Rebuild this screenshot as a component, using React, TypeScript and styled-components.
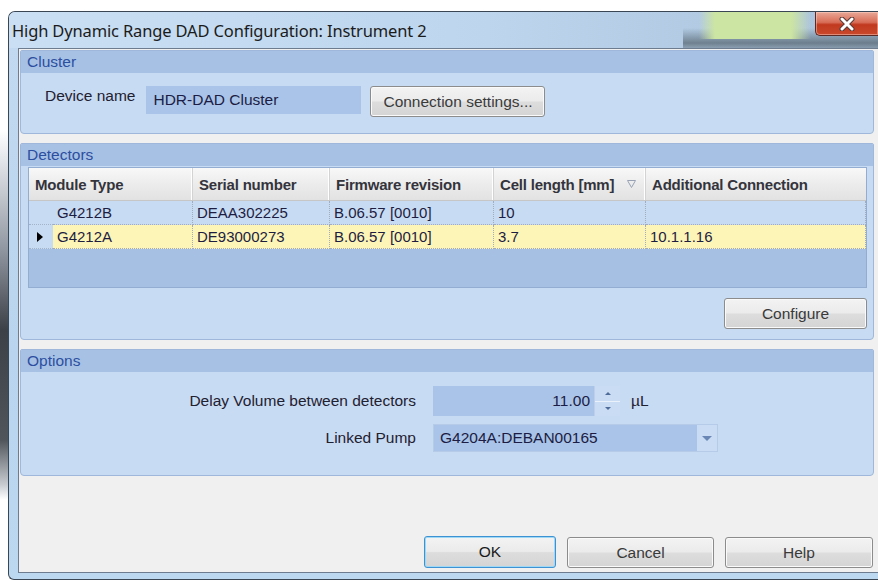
import styled, { createGlobalStyle } from "styled-components";

const GlobalStyle = createGlobalStyle`
  html, body {
    margin: 0;
    padding: 0;
  }
  body {
    width: 878px;
    height: 580px;
    overflow: hidden;
    font-family: "Liberation Sans", Arial, sans-serif;
    background:
      linear-gradient(
          to bottom,
          #ffffff 0,
          #ffffff 130px,
          #d9dde2 170px,
          #9096a0 250px,
          #3c4047 330px,
          #50555c 440px,
          #c9cdd2 485px,
          #ffffff 500px
        )
        left top / 8px 100% no-repeat,
      #ffffff;
  }
`;

const Frame = styled.div`
  box-sizing: border-box;
  margin: 11px 0 0 8px;
  width: 870px;
  height: 569px;
  border: 1px solid #3a4654;
  border-right: none;
  border-radius: 7px 0 0 6px;
  padding: 0 0 6px 0;
  display: flex;
  flex-direction: column;
  background: linear-gradient(to bottom, #c3daf1, #b9d4ee 60%, #bcd7f0);
`;

// glass title bar, with the blurred desktop showing through on the right
const TitleBar = styled.div`
  height: 36px;
  flex: none;
  display: flex;
  align-items: flex-start;
  padding-left: 3px;
  border-radius: 6px 0 0 0;
  background:
    linear-gradient(to right, rgba(205, 229, 162, 0), #cde5a2 16px, #cde5a2 92px, rgba(205, 229, 162, 0) 112px) 690px 0 / 112px 27px no-repeat,
    linear-gradient(to bottom, rgba(0, 0, 0, 0) 16px, rgba(66, 80, 88, 0.6) 31px, rgba(66, 80, 88, 0.35) 36px) right top / 195px 100% no-repeat,
    linear-gradient(to right, #cadff3, #bdd6ee 55%, #a9c1da);
`;

const Title = styled.div`
  margin-top: 7px;
  font-family: "Noto Sans", "Open Sans", sans-serif;
  font-size: 16.5px;
  letter-spacing: -0.15px;
  color: #1b1b1b;
  white-space: nowrap;
`;

const CloseButton = styled.div`
  margin-left: auto;
  width: 63px;
  height: 24px;
  box-sizing: border-box;
  border: 1px solid #5b2a24;
  border-top: none;
  border-right: none;
  border-radius: 0 0 0 5px;
  display: flex;
  align-items: center;
  justify-content: center;
  background: linear-gradient(to bottom, #e9a796 0%, #d86d57 45%, #c13a20 55%, #c9482c 100%);
  box-shadow: inset 0 0 0 1px rgba(255, 220, 210, 0.45);
`;

const Client = styled.div`
  flex: 1;
  margin-left: 9px;
  box-sizing: border-box;
  border: 1px solid #6d7d8f;
  border-right: none;
  background: #f0f0f0;
  display: flex;
  flex-direction: column;
`;

const Panel = styled.section<{ $gap: number }>`
  margin: ${(p) => p.$gap}px 4px 0 1px;
  border: 1px solid #9fb7da;
  border-radius: 2px 2px 4px 4px;
  overflow: hidden;
  background: #c7dbf3;
`;

const PanelHeader = styled.div`
  height: 22px;
  line-height: 22px;
  padding-left: 6px;
  background: #a7c1e5;
  color: #2c4f9f;
  font-size: 15.5px;
`;

const ClusterBody = styled.div`
  display: flex;
  align-items: flex-start;
  padding: 13px 0 16px 24px;
`;

const Label = styled.span`
  font-size: 15.5px;
  line-height: 20px;
  color: #1f2030;
  white-space: nowrap;
`;

const TextField = styled.div<{ $width: number }>`
  width: ${(p) => p.$width}px;
  height: 28px;
  margin: 0 9px 0 11px;
  padding-left: 7px;
  box-sizing: border-box;
  display: flex;
  align-items: center;
  background: #a9c4e8;
  font-size: 15.5px;
  color: #1c1c44;
`;

const Button = styled.button<{ $width: number; $focused?: boolean }>`
  width: ${(p) => p.$width}px;
  height: ${(p) => (p.$focused ? 32 : 31)}px;
  padding: 0;
  box-sizing: border-box;
  border: 1px solid ${(p) => (p.$focused ? "#3c92d2" : "#8c8c8c")};
  border-radius: 3px;
  background: linear-gradient(to bottom, #f3f3f3 0%, #ebebeb 48%, #dddddd 52%, #d4d4d4 100%);
  box-shadow: inset 0 0 0 1px ${(p) => (p.$focused ? "#9fd8f4" : "#fafafa")};
  font-family: "Liberation Sans", Arial, sans-serif;
  font-size: 15.5px;
  color: ${(p) => (p.$focused ? "#1a1a1a" : "#3a3a3a")};
`;

const DetectorsBody = styled.div`
  display: flex;
  flex-direction: column;
  padding: 1px 6px 10px 7px;
`;

const Grid = styled.div`
  height: 121px;
  box-sizing: border-box;
  border: 1px solid #93acd1;
  background: #a6c0e4;
  font-size: 15px;
`;

const HeaderRow = styled.div`
  display: grid;
  grid-template-columns: 164px 137px 164px 152px 1fr;
  height: 33px;
  box-sizing: border-box;
  border-bottom: 1px solid #c6c6c6;
  background: linear-gradient(to bottom, #f8f8f8, #ececec 50%, #e2e2e2);
`;

const HeaderCell = styled.div`
  display: flex;
  align-items: center;
  padding: 0 9px 0 6px;
  border-right: 1px solid #d3d3d3;
  box-shadow: inset -1px 0 0 #ffffff;
  font-weight: bold;
  letter-spacing: -0.2px;
  color: #34343c;
  white-space: nowrap;

  &:last-child {
    border-right: none;
    box-shadow: none;
  }

  svg {
    margin-left: auto;
  }
`;

const Row = styled.div<{ $current?: boolean }>`
  display: grid;
  grid-template-columns: 24px 140px 137px 164px 152px 1fr;
  height: 24px;
  background: ${(p) => (p.$current ? "#fdf5b7" : "#c7dbf3")};
`;

const RowHead = styled.div`
  display: flex;
  align-items: center;
  padding-left: 8px;
  background: #c7dbf3;
  border-bottom: 1px dotted #a3b3c9;
`;

const Cell = styled.div`
  display: flex;
  align-items: center;
  padding-left: 4px;
  border-right: 1px dotted #a3abbd;
  border-bottom: 1px dotted #a3abbd;
  color: #1d1d42;
  white-space: nowrap;
`;

const ConfigureRow = styled.div`
  display: flex;
  justify-content: flex-end;
  margin-top: 10px;
`;

const OptionsBody = styled.div`
  display: grid;
  grid-template-columns: 395px max-content;
  column-gap: 17px;
  row-gap: 8px;
  align-items: center;
  padding: 14px 0 23px;

  ${Label} {
    text-align: right;
  }
`;

const UnitRow = styled.div`
  display: flex;
  align-items: center;
  gap: 11px;
`;

const SpinBox = styled.div`
  width: 187px;
  height: 30px;
  display: flex;
  background: #a9c4e8;
`;

const SpinValue = styled.div`
  flex: 1;
  display: flex;
  align-items: center;
  justify-content: flex-end;
  padding-right: 4px;
  font-size: 15.5px;
  color: #1c1c44;
`;

const SpinButtons = styled.div`
  width: 25px;
  display: flex;
  flex-direction: column;
  background: #cadcf3;
  border-left: 1px solid #bcd0ec;
`;

const SpinHalf = styled.div`
  flex: 1;
  display: flex;
  align-items: center;
  justify-content: center;

  & + & {
    border-top: 1px solid #eaf1fa;
  }
`;

const Combo = styled.div`
  width: 285px;
  height: 28px;
  display: flex;
  box-sizing: border-box;
  border: 1px solid #b6cbe8;
  background: #a9c4e8;
`;

const ComboText = styled.div`
  flex: 1;
  display: flex;
  align-items: center;
  padding-left: 6px;
  font-size: 15.5px;
  color: #1c1c44;
`;

const ComboArrow = styled.div`
  width: 20px;
  display: flex;
  align-items: center;
  justify-content: center;
  background: #c9dcf3;
`;

const Footer = styled.div`
  flex: 1;
  display: flex;
  align-items: flex-end;
  justify-content: flex-end;
  gap: 11px;
  padding: 0 5px 4px 0;
`;

const columns = [
  { title: "Module Type" },
  { title: "Serial number" },
  { title: "Firmware revision" },
  { title: "Cell length [mm]", sorted: true },
  { title: "Additional Connection" },
];

const detectors = [
  { module: "G4212B", serial: "DEAA302225", firmware: "B.06.57 [0010]", cell: "10", extra: "" },
  { module: "G4212A", serial: "DE93000273", firmware: "B.06.57 [0010]", cell: "3.7", extra: "10.1.1.16", current: true },
];

function CloseGlyph() {
  return (
    <svg width="16" height="14" viewBox="0 0 16 14">
      <path d="M3 2 L13 12 M13 2 L3 12" stroke="#5a3a36" strokeWidth="5" strokeLinecap="round" />
      <path d="M3 2 L13 12 M13 2 L3 12" stroke="#ffffff" strokeWidth="3" strokeLinecap="round" />
    </svg>
  );
}

function SortGlyph() {
  return (
    <svg width="9" height="8" viewBox="0 0 9 8">
      <path d="M0.5 0.5 H8.5 L4.5 7.5 Z" fill="none" stroke="#98a2b4" />
    </svg>
  );
}

function RowMarker() {
  return (
    <svg width="6" height="10" viewBox="0 0 6 10">
      <path d="M0 0 L6 5 L0 10 Z" fill="#000" />
    </svg>
  );
}

function Arrow({ up, size = 5, color = "#4f6b99" }: { up?: boolean; size?: number; color?: string }) {
  const h = Math.ceil(size / 2);
  return (
    <svg width={size} height={h} viewBox={`0 0 ${size} ${h}`}>
      <path d={up ? `M0 ${h} L${size / 2} 0 L${size} ${h} Z` : `M0 0 L${size} 0 L${size / 2} ${h} Z`} fill={color} />
    </svg>
  );
}

export default function App() {
  return (
    <>
      <GlobalStyle />
      <Frame>
        <TitleBar>
          <Title>High Dynamic Range DAD Configuration: Instrument 2</Title>
          <CloseButton>
            <CloseGlyph />
          </CloseButton>
        </TitleBar>
        <Client>
          <Panel $gap={1}>
            <PanelHeader>Cluster</PanelHeader>
            <ClusterBody>
              <Label>Device name</Label>
              <TextField $width={215}>HDR-DAD Cluster</TextField>
              <Button $width={175}>Connection settings...</Button>
            </ClusterBody>
          </Panel>

          <Panel $gap={9}>
            <PanelHeader>Detectors</PanelHeader>
            <DetectorsBody>
              <Grid>
                <HeaderRow>
                  {columns.map((c) => (
                    <HeaderCell key={c.title}>
                      {c.title}
                      {c.sorted && <SortGlyph />}
                    </HeaderCell>
                  ))}
                </HeaderRow>
                {detectors.map((d) => (
                  <Row key={d.serial} $current={d.current}>
                    <RowHead>{d.current && <RowMarker />}</RowHead>
                    <Cell>{d.module}</Cell>
                    <Cell>{d.serial}</Cell>
                    <Cell>{d.firmware}</Cell>
                    <Cell>{d.cell}</Cell>
                    <Cell>{d.extra}</Cell>
                  </Row>
                ))}
              </Grid>
              <ConfigureRow>
                <Button $width={143}>Configure</Button>
              </ConfigureRow>
            </DetectorsBody>
          </Panel>

          <Panel $gap={9}>
            <PanelHeader>Options</PanelHeader>
            <OptionsBody>
              <Label>Delay Volume between detectors</Label>
              <UnitRow>
                <SpinBox>
                  <SpinValue>11.00</SpinValue>
                  <SpinButtons>
                    <SpinHalf>
                      <Arrow up size={6} />
                    </SpinHalf>
                    <SpinHalf>
                      <Arrow size={6} />
                    </SpinHalf>
                  </SpinButtons>
                </SpinBox>
                <Label>µL</Label>
              </UnitRow>
              <Label>Linked Pump</Label>
              <Combo>
                <ComboText>G4204A:DEBAN00165</ComboText>
                <ComboArrow>
                  <Arrow size={10} color="#6a86b4" />
                </ComboArrow>
              </Combo>
            </OptionsBody>
          </Panel>

          <Footer>
            <Button $width={132} $focused>
              OK
            </Button>
            <Button $width={147}>Cancel</Button>
            <Button $width={148}>Help</Button>
          </Footer>
        </Client>
      </Frame>
    </>
  );
}
